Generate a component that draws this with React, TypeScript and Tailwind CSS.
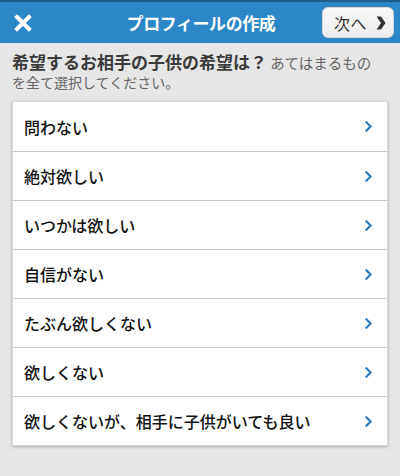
import { ChevronRight } from "lucide-react";

const options = [
  "問わない",
  "絶対欲しい",
  "いつかは欲しい",
  "自信がない",
  "たぶん欲しくない",
  "欲しくない",
  "欲しくないが、相手に子供がいても良い",
];

function CloseIcon() {
  return (
    <svg width="18" height="18" viewBox="0 0 18 18" fill="none">
      <path d="M3 3L15 15M15 3L3 15" stroke="#fff" strokeWidth="4" strokeLinecap="square" />
    </svg>
  );
}

function NextArrow() {
  return (
    <svg width="10" height="14" viewBox="0 0 10 14">
      <path d="M0.5 0.5L5 0.5L9.5 7L5 13.5L0.5 13.5L5 7Z" fill="#333" />
    </svg>
  );
}

export default function App() {
  return (
    <div
      className="w-[400px] h-[476px] overflow-hidden bg-[#e6e6e6]"
      style={{ fontFamily: '"Noto Sans CJK JP", "Noto Sans", sans-serif' }}
    >
      {/* Header */}
      <header className="h-[43px] bg-[#2b87c8] border-t-2 border-[#1d5d8c] flex items-center px-[14px] relative">
        <CloseIcon />
        <h1 className="flex-1 text-center text-white text-[17px] font-bold tracking-tight pr-[16px]">
          プロフィールの作成
        </h1>
        <button className="absolute right-[6px] top-[5px] w-[72px] h-[31px] rounded-[6px] bg-gradient-to-b from-[#fafafa] to-[#ececec] border border-[#d6d6d6] flex items-center justify-center gap-[9px] pl-[4px]">
          <span className="text-[16px] text-[#333] leading-none tracking-wide">次へ</span>
          <NextArrow />
        </button>
      </header>

      {/* Question */}
      <p className="px-[12px] pt-[9px] leading-[19px]">
        <span className="text-[17px] font-bold text-[#3a3a3a]">希望するお相手の子供の希望は？</span>
        <span className="text-[14.5px] text-[#666]"> あてはまるもの</span>
        <br />
        <span className="text-[14px] text-[#666]">を全て選択してください。</span>
      </p>

      {/* Options */}
      <ul className="mx-[12px] mt-[9px] bg-white shadow-[0_1px_3px_rgba(0,0,0,0.25)] border border-[#d8d8d8]">
        {options.map((opt, i) => (
          <li
            key={opt}
            className={`h-[49px] flex items-center justify-between pl-[11px] pr-[10px] ${
              i > 0 ? "border-t border-[#c8c8c8]" : ""
            }`}
          >
            <span className="text-[16px] font-medium text-[#111]">{opt}</span>
            <ChevronRight size={17} strokeWidth={3.2} className="text-[#2a7dc0]" />
          </li>
        ))}
      </ul>
    </div>
  );
}
